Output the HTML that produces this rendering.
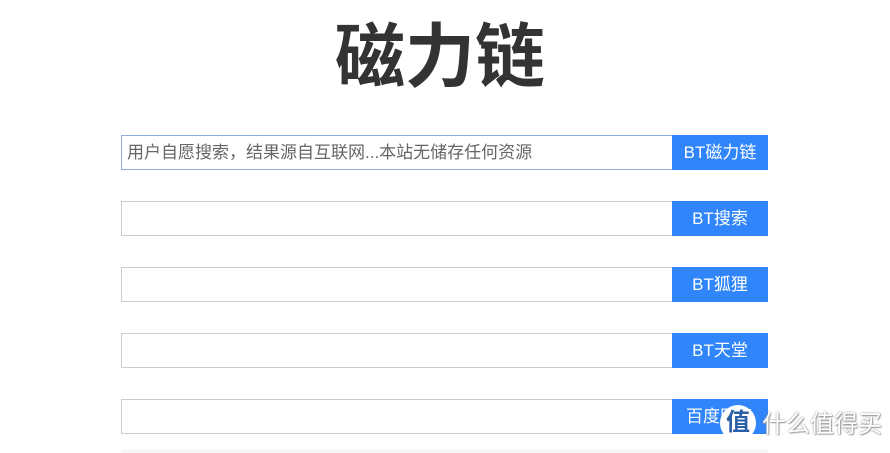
<!DOCTYPE html>
<html><head><meta charset="utf-8"><style>
body{margin:0;width:890px;height:453px;background:#fff;position:relative;overflow:hidden;font-family:"Liberation Sans","Noto Sans CJK SC",sans-serif}
.t{position:absolute;left:0;width:880px;top:14px;text-align:center;font-size:70px;font-weight:bold;color:#333;line-height:86px;letter-spacing:0}
.r{position:absolute;left:121px;width:647px;height:35px}
.in{position:absolute;left:0;top:0;width:545px;height:33px;border:1px solid #ccc;font-size:17px;color:#666;line-height:33px;padding-left:5px}
.b{position:absolute;left:551px;top:0;width:96px;height:35px;background:#2f85f9;color:#fff;font-size:17px;line-height:35px;text-align:center}
</style></head><body>
<div class="t">磁力链</div>
<div class="r" style="top:135px"><div class="in" style="border-color:#8eaedc">用户自愿搜索，结果源自互联网...本站无储存任何资源</div><div class="b">BT磁力链</div></div>
<div class="r" style="top:201px"><div class="in"></div><div class="b">BT搜索</div></div>
<div class="r" style="top:267px"><div class="in"></div><div class="b">BT狐狸</div></div>
<div class="r" style="top:333px"><div class="in"></div><div class="b">BT天堂</div></div>
<div class="r" style="top:399px"><div class="in"></div><div class="b">百度网盘</div></div>
<div style="position:absolute;left:121px;top:449px;width:647px;height:4px;background:#f8f8f8"></div>
<div style="position:absolute;left:720px;top:405px;width:36px;height:36px;border-radius:50%;background:#fff;color:#2a5fa8;font-size:24px;font-weight:bold;line-height:36px;text-align:center">值</div>
<div style="position:absolute;left:762px;top:410px;font-size:24px;white-space:nowrap;color:#fff;text-shadow:0 0 2px #888,1px 1px 1px #aaa;line-height:30px">什么值得买</div>
</body></html>
